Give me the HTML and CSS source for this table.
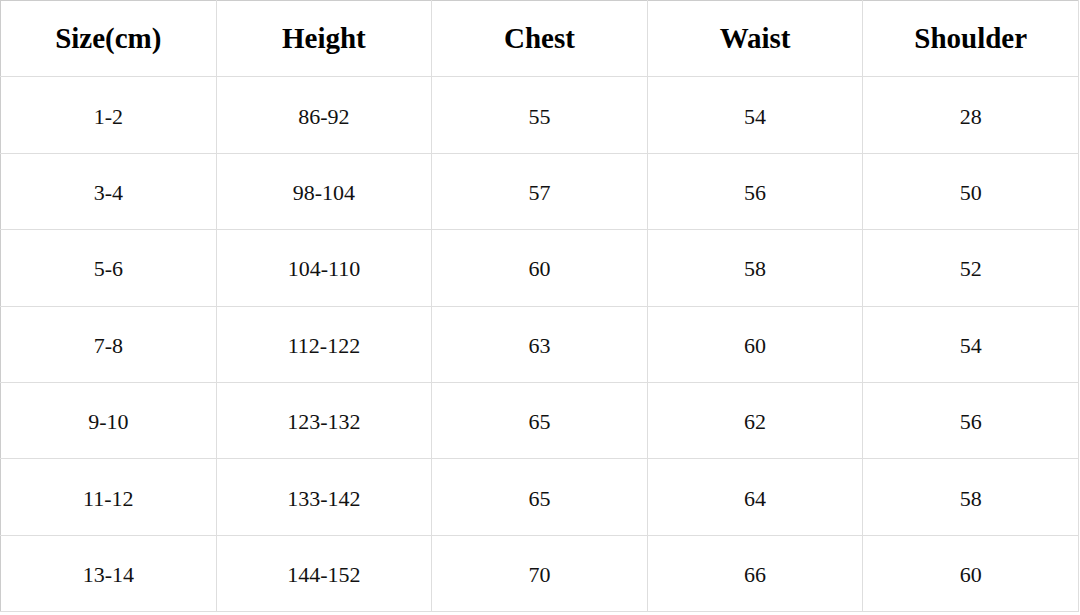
FILE: index.html
```html
<!DOCTYPE html>
<html lang="en">
<head>
<meta charset="utf-8">
<title>Size Chart</title>
<link rel="stylesheet" href="styles.css">
</head>
<body>
<table class="size-table">
  <thead>
    <tr><th>Size(cm)</th><th>Height</th><th>Chest</th><th>Waist</th><th>Shoulder</th></tr>
  </thead>
  <tbody>
    <tr><td>1-2</td><td>86-92</td><td>55</td><td>54</td><td>28</td></tr>
    <tr><td>3-4</td><td>98-104</td><td>57</td><td>56</td><td>50</td></tr>
    <tr><td>5-6</td><td>104-110</td><td>60</td><td>58</td><td>52</td></tr>
    <tr><td>7-8</td><td>112-122</td><td>63</td><td>60</td><td>54</td></tr>
    <tr><td>9-10</td><td>123-132</td><td>65</td><td>62</td><td>56</td></tr>
    <tr><td>11-12</td><td>133-142</td><td>65</td><td>64</td><td>58</td></tr>
    <tr><td>13-14</td><td>144-152</td><td>70</td><td>66</td><td>60</td></tr>
  </tbody>
</table>
</body>
</html>
```
FILE: styles.css
```css
html, body {
  margin: 0;
  padding: 0;
  background: #ffffff;
}

.size-table {
  width: 1079px;
  border-collapse: collapse;
  table-layout: fixed;
  font-family: "Liberation Serif", "DejaVu Serif", serif;
  font-variant-numeric: oldstyle-nums;
  color: #111111;
}

.size-table tr {
  height: 76.4px;
}

.size-table th,
.size-table td {
  border: 1px solid #dedede;
  text-align: center;
  vertical-align: middle;
  padding: 0;
}

.size-table thead th {
  border-top-color: #cccccc;
  font-size: 29px;
  font-weight: bold;
  color: #000000;
}

.size-table td {
  font-size: 22px;
  padding-top: 3px;
}

.size-table th:first-child,
.size-table td:first-child {
  border-left-color: #cccccc;
}
```
